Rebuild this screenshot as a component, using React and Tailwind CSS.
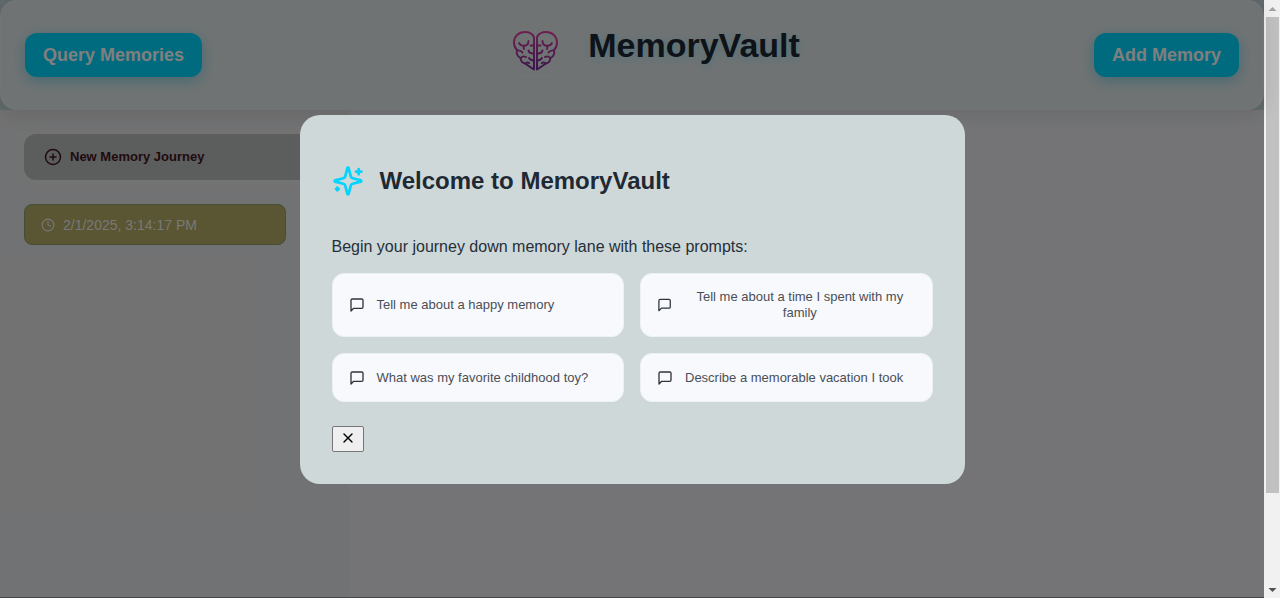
import React from "react";
import { CirclePlus, Clock, X } from "lucide-react";

const PROMPTS = [
  "Tell me about a happy memory",
  "Tell me about a time I spent with my family",
  "What was my favorite childhood toy?",
  "Describe a memorable vacation I took",
];

function MessageIcon() {
  return (
    <svg width="16" height="16" viewBox="0 0 24 24" fill="none" stroke="currentColor" strokeWidth="2" strokeLinecap="round" strokeLinejoin="round" className="text-[#2f343c]" aria-hidden="true">
      <path d="M21 15a2 2 0 0 1-2 2H7l-4 4V5a2 2 0 0 1 2-2h14a2 2 0 0 1 2 2z" />
    </svg>
  );
}

function SparklesIcon() {
  return (
    <svg width="32" height="32" viewBox="0 0 24 24" fill="none" stroke="currentColor" strokeWidth="2" strokeLinecap="round" strokeLinejoin="round" className="shrink-0 text-[#00d4ff]" aria-hidden="true">
      <path d="M9.937 15.5A2 2 0 0 0 8.5 14.063l-6.135-1.582a.5.5 0 0 1 0-.962L8.5 9.936A2 2 0 0 0 9.937 8.5l1.582-6.135a.5.5 0 0 1 .963 0L14.063 8.5A2 2 0 0 0 15.5 9.937l6.135 1.581a.5.5 0 0 1 0 .964L15.5 14.063a2 2 0 0 0-1.437 1.437l-1.582 6.135a.5.5 0 0 1-.963 0z" />
      <path d="M20 3v4" />
      <path d="M22 5h-4" />
      <path d="M4 17v2" />
      <path d="M5 18H3" />
    </svg>
  );
}

function BrainHalf() {
  return (
    <g>
      <path d="M22 38.500V6C20.500 3 17 1 13 1 6.500 1 2 5.500 2 11.500c0 3 1 5.500 3 7.500-.8 3.500.5 6.500 3.500 8 .2 3 1.800 4.800 4.500 5.500z" />
      <path d="M7 12c1 2 2.500 2.800 4.500 2.800 3 0 5-1.800 5-4.800" />
      <path d="M12 15c-.6 1-.6 2 0 3" />
      <path d="M5 19.500c2.500-.4 4.500.3 5.500 2" />
      <path d="M22 14.500h-3.500" />
      <path d="M22 22.500c-3 .3-5-.8-5.500-3" />
      <path d="M9 27c1-1.500 3-2 5-1" />
      <path d="M22 29.500c-2 0-4-.8-5-2.500" />
      <path d="M14 32c1-.6 2-.6 3.200 0" />
    </g>
  );
}

function Logo() {
  return (
    <svg width="48" height="48" viewBox="0 0 48 48" fill="none" role="img" aria-label="MemoryVault logo">
      <defs>
        <linearGradient id="brain" gradientUnits="userSpaceOnUse" x1="6" y1="0" x2="18" y2="36">
          <stop offset="0" stopColor="#e0429f" />
          <stop offset="1" stopColor="#762a96" />
        </linearGradient>
      </defs>
      <g stroke="url(#brain)" strokeWidth="1.9" strokeLinecap="round" strokeLinejoin="round">
        <BrainHalf />
        <g transform="translate(47 0) scale(-1 1)"><BrainHalf /></g>
      </g>
      <path d="M6 44.500h35" stroke="#ffffff" strokeOpacity=".25" strokeDasharray="3 1" />
    </svg>
  );
}

function ScrollTrack() {
  return (
    <div className="flex w-4 shrink-0 flex-col items-center bg-[#f1f1f1]" aria-hidden="true">
      <svg width="16" height="17" viewBox="0 0 16 17"><path d="M4.500 11h8l-4-4z" fill="#a3a3a3" /></svg>
      <div className="ml-px w-[13px] basis-[476px] bg-[#c1c1c1]" />
      <div className="flex-1" />
      <svg width="16" height="17" viewBox="0 0 16 17"><path d="M4.500 7h8l-4 4z" fill="#505050" /></svg>
    </div>
  );
}

const ACTION =
  "h-11 rounded-xl bg-[#00d4ff] px-[18px] text-lg font-bold text-white shadow-[0_4px_15px_rgba(0,180,220,0.4)]";

export default function App() {
  return (
    <div className="flex h-screen font-['Liberation_Sans',Arial,sans-serif]">
      <div className="relative flex min-w-0 flex-1 flex-col border-b border-[#454648] bg-[#e8e9ec]">
        <div className="z-10 bg-[#c0d2d6]">
          <header className="flex h-[110px] items-center justify-between rounded-2xl border border-[#e4e9ea] bg-[#e1e7e8] px-6 shadow-[0_4px_20px_rgba(0,0,0,0.1)]">
            <button type="button" className={ACTION}>Query Memories</button>
            <div className="flex items-center gap-7 pl-4">
              <Logo />
              <h1 className="pb-5 text-[34px] leading-10 font-bold text-[#1c2733] [text-shadow:0_2px_10px_rgba(0,212,255,0.3)]">
                MemoryVault
              </h1>
            </div>
            <button type="button" className={ACTION}>Add Memory</button>
          </header>
        </div>
        <div className="flex flex-1">
          <aside className="flex w-[349px] shrink-0 flex-col gap-6 bg-[#e3e4e6] p-6">
            <button type="button" className="flex h-[46px] items-center gap-2 rounded-xl bg-[#b8baba] px-5 text-[13px] font-bold text-[#401520] shadow-[0_4px_20px_rgba(255,255,240,0.15)]">
              <CirclePlus size={18} />
              New Memory Journey
            </button>
            <button type="button" className="mr-[39px] flex h-[41px] items-center gap-2 rounded-lg border border-[#86a068] bg-[#b4aa64] px-4 text-sm text-[#f0f0ea]">
              <Clock size={14} />
              2/1/2025, 3:14:17 PM
            </button>
          </aside>
          <main className="flex-1" />
        </div>

        <div className="absolute inset-0 z-20 flex items-center justify-center bg-black/50 pt-0.5">
          <section role="dialog" aria-modal="true" aria-labelledby="welcome-title" className="w-full max-w-[665px] rounded-[20px] bg-[#ced8d9] p-8">
            <div className="flex h-[68px] items-center gap-4">
              <SparklesIcon />
              <h2 id="welcome-title" className="text-2xl font-bold text-[#1f2933]">Welcome to MemoryVault</h2>
            </div>
            <p className="mt-5 text-base text-[#262f38]">Begin your journey down memory lane with these prompts:</p>
            <div className="mt-3.5 grid grid-cols-2 gap-4">
              {PROMPTS.map((prompt) => (
                <button key={prompt} type="button" className="flex min-h-[49px] items-center gap-3 rounded-xl border border-[#edf1f4] bg-[#f8f9fc] px-4 py-[15px] text-[13px] leading-4 text-[#4a4f57]">
                  <MessageIcon />
                  <span>{prompt}</span>
                </button>
              ))}
            </div>
            <button type="button" aria-label="Close" className="mt-6 flex h-[26px] w-8 items-center justify-center rounded-xs border border-[#767676] bg-[#efefef] pb-0.5 text-black">
              <X size={16} />
            </button>
          </section>
        </div>
      </div>
      <ScrollTrack />
    </div>
  );
}
